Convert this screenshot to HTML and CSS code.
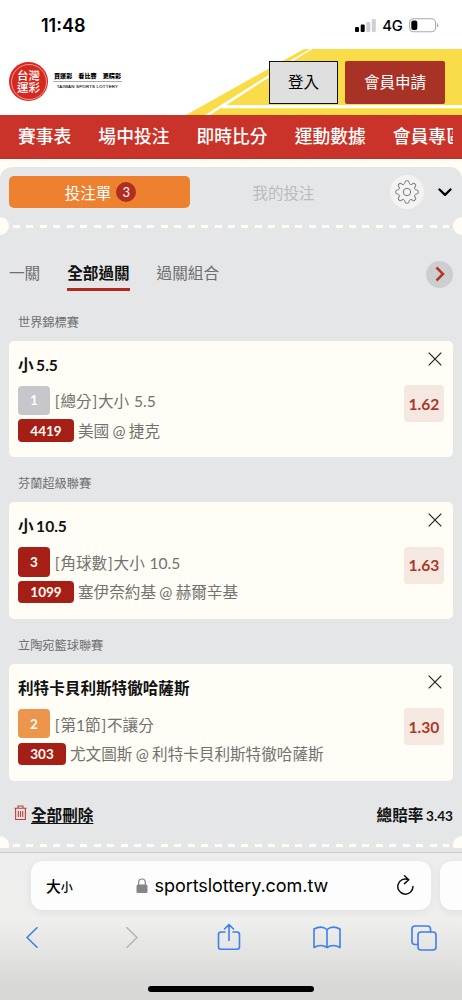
FILE: index.html
```
<!DOCTYPE html>
<html lang="zh-Hant">
<head>
<meta charset="utf-8">
<meta name="viewport" content="width=device-width, initial-scale=1">
<title>台灣運彩</title>
<link rel="stylesheet" href="styles.css">
</head>
<body>
<div class="phone">
  <div class="status">
    <span class="clock">11:48</span>
    <span class="status-right">
      <svg class="signal" width="21" height="13" viewBox="0 0 21 13"><rect x="0" y="8" width="4" height="5" rx="1"/><rect x="5.7" y="5.5" width="4" height="7.5" rx="1"/><rect class="dim" x="11.3" y="3" width="4" height="10" rx="1"/><rect class="dim" x="16.8" y="0" width="4" height="13" rx="1"/></svg>
      <span class="net">4G</span>
      <svg width="30" height="15" viewBox="0 0 30 15"><rect x=".6" y=".7" width="26" height="13" rx="4" fill="none" stroke="#aaa" stroke-width="1.1"/><rect x="2.3" y="2.5" width="6" height="9.5" rx="2"/><path d="M28 5v4.6q1.3-.6 1.3-2.3T28 5z" fill="#aaa"/></svg>
    </span>
  </div>

  <header class="header">
    <svg class="header-art" viewBox="0 0 462 66"><path d="M304 0H462V66H186z" fill="#f9dd48"/><path d="M310 0h2.5L293 12 268 29 226.500 56H462v3.200H220L210 66h-5L268 26.500 293 10z" fill="#fff"/></svg>
    <div class="logo">
      <span class="seal"><span class="seal-ring"></span><span class="seal-text"><span>台灣</span><span>運彩</span></span></span>
      <span class="logo-copy"><span class="slogan"><b>買運彩</b><b>看比賽</b><b>更精彩</b></span><span class="english">TAIWAN SPORTS LOTTERY</span></span>
    </div>
    <div class="account"><span class="login">登入</span><span class="join">會員申請</span></div>
  </header>

  <nav class="nav"><div class="nav-track"><span>賽事表</span><span>場中投注</span><span>即時比分</span><span>運動數據</span><span>會員專區</span></div></nav>

  <main class="main">
    <section class="slip">
      <div class="slip-head">
        <div class="tab-on">投注單<span class="count">3</span></div>
        <div class="tab-off">我的投注</div>
        <span class="gear"><svg width="24" height="24" viewBox="-12 -12 24 24"><defs><path id="tooth" d="M-3.200-7.700Q-2.100-8.200-2-9.600-1.900-11.200-.9-11.200H.9Q1.900-11.200 2-9.600 2.100-8.200 3.200-7.700"/></defs><use href="#tooth"/><use href="#tooth" transform="rotate(45)"/><use href="#tooth" transform="rotate(90)"/><use href="#tooth" transform="rotate(135)"/><use href="#tooth" transform="rotate(180)"/><use href="#tooth" transform="rotate(225)"/><use href="#tooth" transform="rotate(270)"/><use href="#tooth" transform="rotate(315)"/><circle r="3.700"/></svg></span>
        <svg class="down" width="14" height="9" viewBox="0 0 14 9"><path d="M1.500 1.500 7 6.800l5.500-5.300"/></svg>
      </div>
      <div class="tear"><i></i><span class="dashes"></span><i></i></div>

      <div class="modes">
        <span>一關</span><span class="active">全部過關</span><span>過關組合</span>
        <span class="more"><svg width="10" height="16" viewBox="0 0 10 16"><path d="M1.500 1.500 8 8l-6.500 6.500"/></svg></span>
      </div>

      <h3 class="league first">世界錦標賽</h3>
      <article class="bet">
        <div class="bet-info">
          <div class="pick">小 5.5</div>
          <div class="row market"><span class="num gray">1</span><span><i>[</i>總分<i>]</i>大小 5.5</span></div>
          <div class="row match"><span class="code">4419</span><span class="teams">美國<em>@</em>捷克</span></div>
        </div>
        <div class="bet-side"><svg class="close" viewBox="0 0 14 14"><path d="m.7.7 12.600 12.600M13.300.7.7 13.300"/></svg><span class="odds">1.62</span></div>
      </article>

      <h3 class="league">芬蘭超級聯賽</h3>
      <article class="bet">
        <div class="bet-info">
          <div class="pick">小 10.5</div>
          <div class="row market"><span class="num">3</span><span><i>[</i>角球數<i>]</i>大小 10.5</span></div>
          <div class="row match"><span class="code">1099</span><span class="teams">塞伊奈約基<em>@</em>赫爾辛基</span></div>
        </div>
        <div class="bet-side"><svg class="close" viewBox="0 0 14 14"><path d="m.7.7 12.600 12.600M13.300.7.7 13.300"/></svg><span class="odds">1.63</span></div>
      </article>

      <h3 class="league">立陶宛籃球聯賽</h3>
      <article class="bet">
        <div class="bet-info">
          <div class="pick">利特卡貝利斯特徹哈薩斯</div>
          <div class="row market"><span class="num orange">2</span><span><i>[</i>第1節<i>]</i>不讓分</span></div>
          <div class="row match"><span class="code short">303</span><span class="teams">尤文圖斯<em>@</em>利特卡貝利斯特徹哈薩斯</span></div>
        </div>
        <div class="bet-side"><svg class="close" viewBox="0 0 14 14"><path d="m.7.7 12.600 12.600M13.300.7.7 13.300"/></svg><span class="odds">1.30</span></div>
      </article>

      <div class="totals">
        <span class="clear"><svg width="13" height="16" viewBox="0 0 13 16"><path d="M.5 3.300h12M4 3V1h5v2M1.600 3.500v11h9.800v-11M4.300 6v6M6.500 6v6M8.700 6v6"/></svg><u>全部刪除</u></span>
        <span class="total">總賠率 <small>3.43</small></span>
      </div>
      <div class="tear bottom"><i></i><span class="dashes"></span><i></i></div>
    </section>
  </main>

  <footer class="safari">
    <div class="address-row">
      <div class="address"><span class="aa">大<small>小</small></span>
        <span class="url"><svg width="12" height="15" viewBox="0 0 12 15"><rect x=".5" y="6.500" width="11" height="8.500" rx="1.500" fill="#858589"/><path d="M2.700 7V4.200Q2.700 1 6 1t3.300 3.200V7" fill="none" stroke="#858589" stroke-width="1.200"/></svg>sportslottery.com.tw</span>
        <svg class="reload" width="19" height="21" viewBox="0 0 19 21"><path d="M12.500 4.600A7.600 7.600 0 1 0 17 11.500M8.500.8l4.200 3.900-4.200 3.900"/></svg>
      </div>
      <div class="next-tab"></div>
    </div>
    <div class="tools">
      <svg width="12" height="21" viewBox="0 0 12 21"><path d="M11 .8 1 10.500l10 9.700"/></svg>
      <svg class="disabled" width="12" height="21" viewBox="0 0 12 21"><path d="m1 .8 10 9.700L1 20.200"/></svg>
      <svg class="share" width="24" height="28" viewBox="0 0 24 28"><path d="M8 9H4Q1.500 9 1.500 11.500v12.300q0 2.500 2.500 2.500h16q2.500 0 2.500-2.500V11.500Q22.500 9 20 9h-4M12 17.500V1.500M7.500 6 12 1.500 16.500 6"/></svg>
      <svg class="book" width="28" height="23" viewBox="0 0 28 23"><path d="M14 3.500Q8.500-1 1 3v18.500q7-4 13 0 6-4 13 0V3Q19.500-1 14 3.500zv18"/></svg>
      <svg class="tabs" width="26" height="26" viewBox="0 0 26 26"><path d="M7 19.500H4Q1 19.500 1 16.500V4q0-3 3-3h12.500q3 0 3 3v3"/><rect x="7" y="7" width="18" height="18" rx="3"/></svg>
    </div>
    <div class="home"></div>
  </footer>
</div>
</body>
</html>
```

FILE: styles.css
```
* { box-sizing: border-box; }
body { margin: 0; font-family: Lato, "Noto Sans CJK TC", sans-serif; }
svg { display: block; flex: none; }
.phone { width: 462px; height: 1000px; overflow: hidden; display: flex; flex-direction: column; background: #fff; }

.status { height: 49px; display: flex; justify-content: space-between; padding: 0 23.500px 0 41px; font-family: Inter, sans-serif; }
.clock { font-size: 18px; font-weight: 600; line-height: 51px; }
.status-right { display: flex; align-items: center; height: 51px; }
.signal { margin-top: -1px; }
.signal .dim { fill: #d0d0d0; }
.net { margin: 1px 6px 0 6px; font-size: 14.800px; font-weight: 500; letter-spacing: -.3px; }

.header { position: relative; height: 66px; display: flex; justify-content: space-between; padding: 12px 17px 0 9px; }
.header-art { position: absolute; top: 0; left: 0; width: 462px; height: 66px; }
.logo, .account { position: relative; display: flex; }
.seal { display: grid; place-items: center; width: 39px; height: 39px; border-radius: 50%; background: #d7281f; margin-top: 1px; color: #fff; }
.seal > * { grid-area: 1 / 1; }
.seal-ring { width: 36px; height: 36px; border: 1px solid #ef9c95; border-radius: 50%; }
.seal-text { display: grid; font: 500 11.500px/11.500px "Noto Sans CJK TC", sans-serif; }
.logo-copy { width: 69px; margin: 10px 0 0 5px; }
.slogan { display: flex; justify-content: space-between; height: 11px; padding: 0 1px; border-bottom: 1px solid #aaa; font: 700 6.100px/9px "Noto Sans CJK TC", sans-serif; }
.english { display: block; padding-top: 1px; font: 4.400px/7px "Liberation Sans", sans-serif; text-align: center; letter-spacing: .2px; white-space: nowrap; -webkit-text-stroke: .1px #222; }
.account { gap: 7px; font-size: 15.500px; line-height: 42px; text-align: center; }
.login { width: 69px; height: 42.500px; border: 1px solid #111; background: #dfdfdf; line-height: 41px; }
.join { width: 100px; height: 42.500px; background: #a83225; border-radius: 2px; color: #fff; }

.nav { height: 43.500px; background: #c93329; border-bottom: 1px solid #bb3027; padding: 0 9px 0 18px; }
.nav-track { display: flex; gap: 27px; overflow: hidden; white-space: nowrap; color: #fff; font-size: 17.800px; font-weight: 500; line-height: 43px; }
.nav-track span { flex: none; }

.main { height: 693px; padding-top: 8.500px; background: #fffdf5; }
.slip { height: 684.500px; border-radius: 12px 12px 0 0; background: #e4e6e8; overflow: hidden; }
.slip-head { display: flex; align-items: center; height: 50px; padding: 0 10px 0 9px; font-size: 15.500px; }
.tab-on { display: flex; align-items: center; justify-content: center; width: 181px; height: 32px; padding-left: 2px; border-radius: 5px; background: #ee8130; color: #fff; }
.count { display: grid; place-items: center; width: 20px; height: 20px; margin-left: 5px; border-radius: 50%; background: #b12d20; font-size: 13px; line-height: 20px; }
.tab-off { width: 187px; text-align: center; color: #b9bbbe; }
.gear { display: grid; place-items: center; width: 34px; height: 34px; margin: -1px 0 0 13px; border-radius: 50%; background: #f3f3f4; }
.gear path, .gear circle { fill: none; stroke: #77797c; stroke-width: 1; }
.down { margin-left: 14px; }
.down path { fill: none; stroke: #000; stroke-width: 2.300; stroke-linecap: round; stroke-linejoin: round; }
.tear { display: flex; align-items: center; height: 18px; margin: 0 -9px; }
.tear i { flex: none; width: 18px; height: 18px; border-radius: 50%; background: #fffdf5; }
.dashes { flex: 1; height: 3px; margin: 1px 4px 0; background: repeating-linear-gradient(90deg, #fffdf5 0 7px, transparent 7px 13.440px); }

.modes { display: flex; align-items: flex-start; gap: 27px; height: 50px; margin-top: 22.500px; padding: 0 9px; font-size: 15.600px; line-height: 30px; color: #6d6e70; }
.modes .active { height: 33.500px; border-bottom: 3.500px solid #b02a20; color: #111; font-weight: 700; }
.more { display: grid; place-items: center; width: 27px; height: 27px; margin: 3px 0 0 auto; border-radius: 50%; background: #cdced0; }
.more path { fill: none; stroke: #b53427; stroke-width: 2.500; }
.league { height: 45px; margin: 0; padding: 0 18px; font-size: 12.200px; font-weight: 400; line-height: 54px; color: #6d6e70; }
.league.first { height: 33px; line-height: 30px; }
.bet { display: flex; justify-content: space-between; height: 116.700px; margin: 0 9px; padding: 0 9px; border-radius: 5px; background: #fffdf5; }
.bet-info { padding-top: 12px; }
.pick { height: 33px; font-size: 15.600px; font-weight: 700; line-height: 25px; color: #111; white-space: pre; word-spacing: -1.300px; }
.row { display: flex; align-items: center; gap: 4px; font-size: 15.600px; color: #72726f; white-space: nowrap; }
.row i { padding: 0 .8px; font-style: normal; }
.row em { margin: 0 3.300px; font-style: normal; }
.teams { margin-top: -2px; }
.market { height: 29.500px; word-spacing: .8px; }
.match { height: 31px; }
.num, .code { display: grid; place-items: center; border-radius: 4px; background: #a61f17; color: #fffdf5; font-size: 13.500px; font-weight: 700; }
.num { width: 32px; height: 29.500px; }
.code { width: 56px; height: 22.500px; }
.code.short { width: 48px; }
.num.gray { background: #c6c6cb; }
.num.orange { background: #ec954c; }
.bet-side { display: flex; flex-direction: column; align-items: flex-end; padding-top: 11px; }
.close { width: 14px; height: 14px; margin-right: 2.500px; }
.close path { fill: none; stroke: #222; stroke-width: 1.200; }
.odds { display: grid; place-items: center; width: 40px; height: 37px; margin-top: 19.500px; border-radius: 4px; background: #f4e8e0; color: #ad3628; font-size: 15.600px; font-weight: 700; }
.totals { display: flex; justify-content: space-between; height: 56px; padding: 0 9px 0 14px; font-size: 15.600px; font-weight: 700; line-height: 68px; color: #111; }
.clear { display: flex; gap: 4px; }
.clear svg { margin-top: 24px; }
.clear path { fill: none; stroke: #bd4039; stroke-width: 1.100; }
.clear u { text-underline-offset: 2px; text-decoration-thickness: 1.300px; }
.total { word-spacing: -1px; }
.total small { font-size: 13.600px; }
.tear.bottom { margin-top: -1px; height: 12.500px; overflow: hidden; align-items: flex-start; }
.tear.bottom .dashes { margin-top: 8px; }

.safari { height: 148px; border-top: 1px solid #ccccd0; background: linear-gradient(#eee 0, #efefed 45%, #d8d8d6 90%); }
.address-row { display: flex; gap: 9px; padding: 8.500px 0 0 31px; }
.address { flex: none; display: flex; align-items: center; width: 400px; height: 49px; padding: 0 16px 0 15px; border-radius: 12px; background: #fdfdfd; box-shadow: 0 2px 10px #0001; }
.aa { width: 89.500px; font-size: 14.800px; font-weight: 500; }
.aa small { font-size: 12px; }
.url { display: flex; align-items: center; gap: 7px; font: 18px Inter, sans-serif; letter-spacing: -.06px; }
.reload { margin-left: auto; }
.reload path { fill: none; stroke: #111; stroke-width: 1.500; stroke-linecap: round; }
.next-tab { flex: none; width: 40px; height: 49px; border-radius: 12px; background: #fdfdfd; box-shadow: 0 2px 10px #0001; }
.tools { display: flex; align-items: center; height: 55px; padding-left: 26px; }
.tools path, .tools rect { fill: none; stroke: #3d7fee; stroke-width: 1.600; stroke-linecap: round; stroke-linejoin: round; }
.tools .disabled { margin-left: 88px; }
.tools .disabled path { stroke: #b5b5b5; }
.share { margin: -2px 0 0 79px; }
.book { margin-left: 71.500px; }
.tabs { margin-left: 70.500px; }
.home { width: 166px; height: 6px; margin: 20.500px auto 0; border-radius: 3px; background: #000; }
```
